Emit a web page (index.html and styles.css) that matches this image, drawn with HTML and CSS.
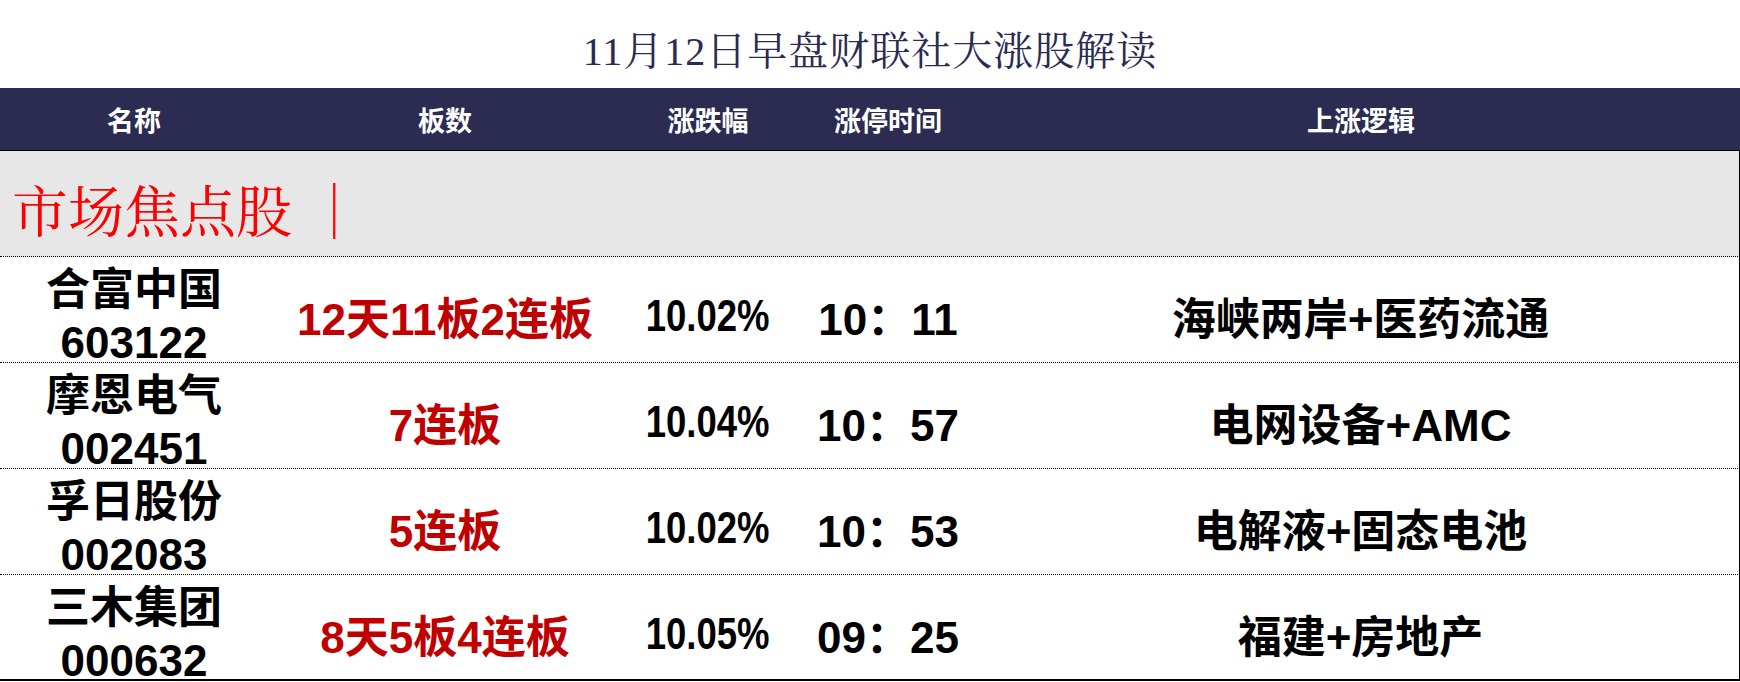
FILE: index.html
```html
<!DOCTYPE html>
<html lang="zh-CN">
<head>
<meta charset="utf-8">
<title>11月12日早盘财联社大涨股解读</title>
<link rel="stylesheet" href="styles.css">
</head>
<body>
<div class="page">
  <h1 class="title">11月12日早盘财联社大涨股解读</h1>
  <div class="table">
    <div class="row head">
      <div class="cell">名称</div>
      <div class="cell">板数</div>
      <div class="cell">涨跌幅</div>
      <div class="cell">涨停时间</div>
      <div class="cell">上涨逻辑</div>
    </div>
    <div class="section"><span class="section-text">市场焦点股 ｜</span></div>
    <div class="row item">
      <div class="cell name"><span>合富中国</span><span class="code">603122</span></div>
      <div class="cell boards">12天11板2连板</div>
      <div class="cell pct"><span class="narrow">10.02%</span></div>
      <div class="cell time">10：11</div>
      <div class="cell logic">海峡两岸+医药流通</div>
    </div>
    <div class="row item">
      <div class="cell name"><span>摩恩电气</span><span class="code">002451</span></div>
      <div class="cell boards">7连板</div>
      <div class="cell pct"><span class="narrow">10.04%</span></div>
      <div class="cell time">10：57</div>
      <div class="cell logic">电网设备+AMC</div>
    </div>
    <div class="row item">
      <div class="cell name"><span>孚日股份</span><span class="code">002083</span></div>
      <div class="cell boards">5连板</div>
      <div class="cell pct"><span class="narrow">10.02%</span></div>
      <div class="cell time">10：53</div>
      <div class="cell logic">电解液+固态电池</div>
    </div>
    <div class="row item last">
      <div class="cell name"><span>三木集团</span><span class="code">000632</span></div>
      <div class="cell boards">8天5板4连板</div>
      <div class="cell pct"><span class="narrow">10.05%</span></div>
      <div class="cell time">09：25</div>
      <div class="cell logic">福建+房地产</div>
    </div>
  </div>
</div>
</body>
</html>
```

FILE: styles.css
```css
* { box-sizing: border-box; }
html, body { margin: 0; padding: 0; background: #ffffff; }
.page { width: 1740px; }

.title {
  margin: 0;
  height: 88px;
  display: flex;
  align-items: center;
  justify-content: center;
  padding-top: 6px;
  font-family: "Liberation Serif", "Noto Serif CJK SC", "Noto Sans CJK SC", serif;
  font-weight: 400;
  font-size: 40px;
  letter-spacing: 1px;
  color: #2b2b52;
}

.table { display: flex; flex-direction: column; }

.row {
  display: grid;
  grid-template-columns: 268px 354px 172px 188px 1fr;
  align-items: center;
}

.cell { text-align: center; }

.head {
  height: 63px;
  background: #2c2c52;
  border-bottom: 1px solid #000;
  color: #ffffff;
  font-family: "Noto Sans CJK SC", sans-serif;
  font-weight: 700;
  font-size: 27px;
}

.section {
  height: 106px;
  background: #e7e7e7;
  border-right: 1px solid #000;
  border-bottom: 1px dotted #000;
  display: flex;
  align-items: center;
  padding: 8px 0 0 12px;
}
.section-text {
  font-family: "Noto Serif CJK SC", "Liberation Serif", "Noto Sans CJK SC", serif;
  font-size: 56px;
  color: #ff0000;
}

.item {
  height: 106px;
  border-right: 1px solid #000;
  border-bottom: 1px dotted #000;
  font-family: "Liberation Sans", "Noto Sans CJK SC", sans-serif;
  font-weight: 700;
  font-size: 44px;
  color: #000;
}
.item.last { border-bottom: 2px solid #000; }

.name {
  align-self: stretch;
  display: flex;
  flex-direction: column;
  align-items: center;
  justify-content: center;
  line-height: 53px;
  padding-top: 6px;
}

.boards { color: #c00000; padding-top: 6px; }
.pct { padding-top: 6px; }
.narrow {
  display: inline-block;
  transform: scaleX(0.83);
}
.time { padding-top: 6px; }
.logic { padding-top: 6px; }
```
